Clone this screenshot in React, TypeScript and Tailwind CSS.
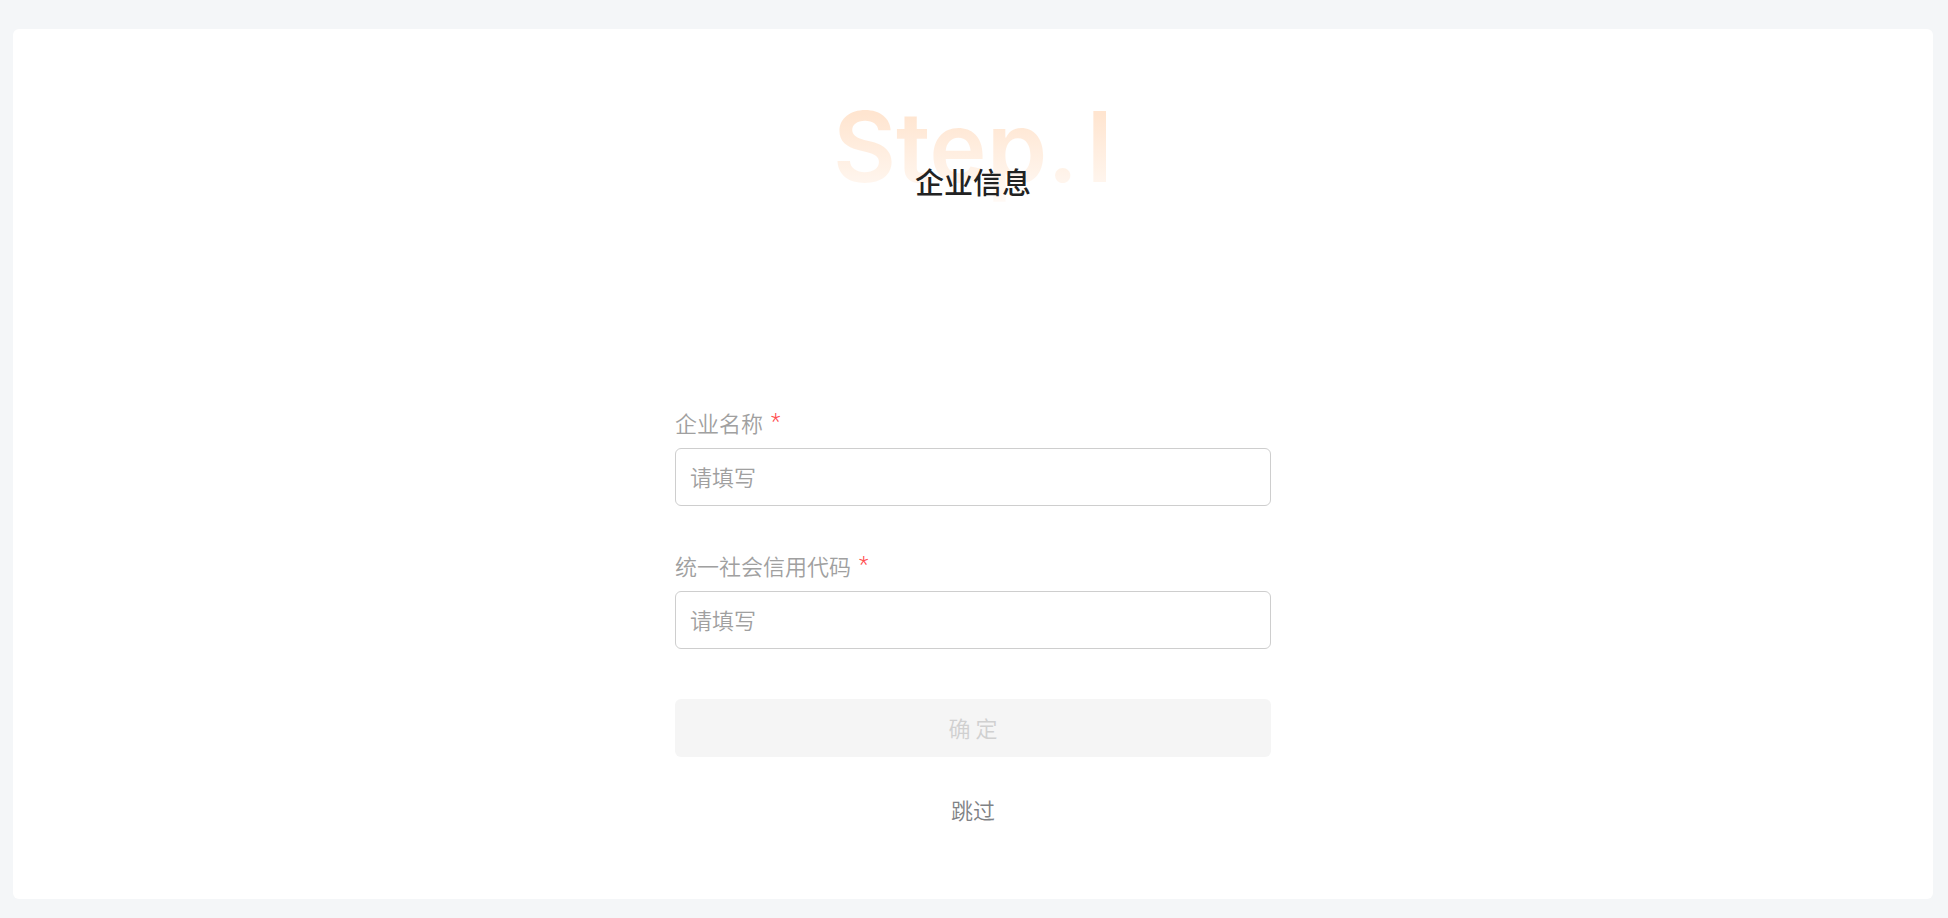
import { useState } from "react";

const fields = [
    { id: "company", label: "企业名称" },
    { id: "creditCode", label: "统一社会信用代码" },
];

export default function App() {
    const [values, setValues] = useState<Record<string, string>>({});
    const ready = fields.every((f) => values[f.id]);

    return (
        <div className="min-h-screen bg-[#f4f6f8] pt-[29px] pr-[15px] pb-5 pl-[13px] font-['Noto_Sans_CJK_SC',sans-serif]">
            <main className="flex flex-col items-center rounded-md bg-white pt-[62px] pb-[74px]">
                <header className="relative flex justify-center">
                    <div
                        aria-hidden="true"
                        className="bg-linear-to-b from-[#ffe5d0] from-20% to-[#fffaf6] bg-clip-text font-['Inter',sans-serif] text-[97px] leading-[112px] font-semibold text-transparent"
                    >
                        Step.<span className="ml-2">I</span>
                    </div>
                    <h1 className="absolute top-[68px] text-[29px] leading-[44px] font-medium whitespace-nowrap text-[#222]">
                        企业信息
                    </h1>
                </header>

                <form className="mt-[203px] w-full max-w-[596px] text-[22px] font-[350]" onSubmit={(e) => e.preventDefault()}>
                    {fields.map((f) => (
                        <div key={f.id} className="mb-[43px]">
                            <label htmlFor={f.id} className="mb-2.5 flex gap-2 leading-8 text-[#a0a0a0]">
                                {f.label}
                                <span className="font-['Roboto',sans-serif] text-[#ff4d4f]">*</span>
                            </label>
                            <input
                                id={f.id}
                                type="text"
                                placeholder="请填写"
                                value={values[f.id] ?? ""}
                                onChange={(e) => setValues({ ...values, [f.id]: e.target.value })}
                                className="block h-[58px] w-full rounded-md border border-[#cecece] px-3.5 pb-0.5 text-[#333] outline-none placeholder:text-[#a0a0a0]"
                            />
                        </div>
                    ))}
                    <button
                        type="submit"
                        disabled={!ready}
                        className="mt-[50px] block h-[58px] w-full rounded-md bg-[#ff7a1a] pb-0.5 text-white disabled:bg-[#f5f5f5] disabled:text-[#d0d0d0]"
                    >
                        确 定
                    </button>
                    <button type="button" className="mx-auto mt-9 block leading-8 text-[#808285]">
                        跳过
                    </button>
                </form>
            </main>
        </div>
    );
}
